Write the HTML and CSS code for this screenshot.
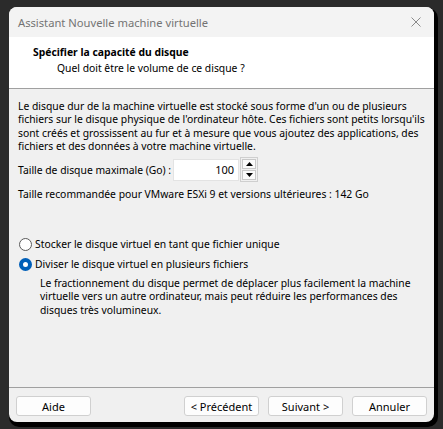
FILE: index.html
```html
<!DOCTYPE html>
<html lang="fr">
<head>
<meta charset="utf-8">
<link rel="stylesheet" href="styles.css">
</head>
<body>
<div class="window">
  <div class="titlebar">
    <span class="title">Assistant Nouvelle machine virtuelle</span>
    <svg class="close" width="10" height="10" viewBox="0 0 10 10"><path d="M0.5 0.5 L9.5 9.5 M9.5 0.5 L0.5 9.5" stroke="#8a8a8a" stroke-width="1" fill="none"/></svg>
  </div>
  <div class="header">
    <div class="h-title">Spécifier la capacité du disque</div>
    <div class="h-sub">Quel doit être le volume de ce disque ?</div>
  </div>
  <div class="content">
    <p class="para">Le disque dur de la machine virtuelle est stocké sous forme d'un ou de plusieurs fichiers sur le disque physique de l'ordinateur hôte. Ces fichiers sont petits lorsqu'ils sont créés et grossissent au fur et à mesure que vous ajoutez des applications, des fichiers et des données à votre machine virtuelle.</p>
    <div class="size-row">
      <span class="label">Taille de disque maximale (Go) :</span>
      <div class="spin">
        <div class="spin-input">100</div>
        <div class="spin-btns">
          <div class="spin-btn"><svg width="7" height="4" viewBox="0 0 7 4"><path d="M3.5 0 L7 4 L0 4 Z" fill="#000"/></svg></div>
          <div class="spin-btn"><svg width="7" height="4" viewBox="0 0 7 4"><path d="M0 0 L7 0 L3.5 4 Z" fill="#000"/></svg></div>
        </div>
      </div>
    </div>
    <div class="reco">Taille recommandée pour VMware ESXi 9 et versions ultérieures : 142 Go</div>
    <div class="radios">
      <label class="radio"><span class="dot"></span>Stocker le disque virtuel en tant que fichier unique</label>
      <label class="radio"><span class="dot checked"></span>Diviser le disque virtuel en plusieurs fichiers</label>
      <p class="desc">Le fractionnement du disque permet de déplacer plus facilement la machine virtuelle vers un autre ordinateur, mais peut réduire les performances des disques très volumineux.</p>
    </div>
  </div>
  <div class="footer">
    <button class="btn">Aide</button>
    <div class="spacer"></div>
    <button class="btn">&lt; Précédent</button>
    <button class="btn">Suivant &gt;</button>
    <button class="btn">Annuler</button>
  </div>
</div>
</body>
</html>
```
FILE: styles.css
```css
html, body {
  margin: 0;
  padding: 0;
}
body {
  width: 443px;
  height: 429px;
  background: #2b2b2b;
  font-family: "Noto Sans", "Open Sans", sans-serif;
  font-size: 10.35px;
  color: #000;
  overflow: hidden;
}
.window {
  margin: 7px 0 0 9px;
  width: 425px;
  height: 415px;
  border-radius: 8px;
  background: #f0f0f0;
  overflow: hidden;
  display: flex;
  flex-direction: column;
  box-shadow: 2px 3px 0 2px #000;
}
.titlebar {
  height: 30px;
  flex: none;
  background: #f3f3f3;
  display: flex;
  align-items: center;
  padding: 0 9px;
}
.title {
  color: #737373;
  flex: 1;
  font-size: 11.2px;
}
.close {
  margin-right: 4px;
}
.header {
  flex: none;
  background: #fff;
  border-bottom: 1px solid #a0a0a0;
  box-sizing: border-box;
  height: 52px;
  padding: 7px 0 0 24px;
}
.h-title {
  font-weight: bold;
  line-height: 16px;
}
.h-sub {
  margin-left: 24px;
  line-height: 17px;
}
.content {
  flex: 1;
  padding: 11px 9px 0 9px;
  border-bottom: 1px solid #a0a0a0;
}
.para {
  margin: 0;
  line-height: 13.3px;
}
.size-row {
  display: flex;
  align-items: center;
  margin-top: 4px;
}
.label {
  margin-right: 2px;
}
.spin {
  display: flex;
  align-items: center;
}
.spin-input {
  width: 66px;
  height: 22px;
  background: #fff;
  border: 1px solid #e3e3e3;
  box-sizing: border-box;
  text-align: right;
  padding-right: 4px;
  line-height: 20px;
  font-size: 11px;
}
.spin-btns {
  display: flex;
  flex-direction: column;
  gap: 1px;
  margin-left: 1px;
  border: 1px solid #cfcfcf;
  padding: 1px;
}
.spin-btn {
  width: 12px;
  height: 8px;
  background: #fafafa;
  border: 1px solid #c8c8c8;
  display: flex;
  align-items: center;
  justify-content: center;
}
.reco {
  margin-top: 5px;
  line-height: 14px;
}
.radios {
  margin-top: 33px;
}
.radio {
  display: flex;
  align-items: center;
  height: 20px;
}
.dot {
  width: 11px;
  height: 11px;
  border: 1px solid #5a5a5a;
  border-radius: 50%;
  background: #fff;
  margin-right: 3px;
  margin-left: 1px;
  flex: none;
}
.dot.checked {
  border: 4px solid #005fb8;
  width: 5px;
  height: 5px;
  background: #fff;
}
.desc {
  margin: 3px 0 0 22px;
  line-height: 13.3px;
}
.footer {
  height: 34px;
  flex: none;
  display: flex;
  align-items: center;
  padding: 0 7px;
  gap: 9px;
}
.spacer {
  flex: 1;
}
.btn {
  width: 75px;
  height: 20px;
  border: 1px solid #d0d0d0;
  border-radius: 3px;
  background: #fdfdfd;
  font-family: inherit;
  font-size: 11px;
  color: #000;
  padding: 0;
  margin-top: 2px;
}
```
